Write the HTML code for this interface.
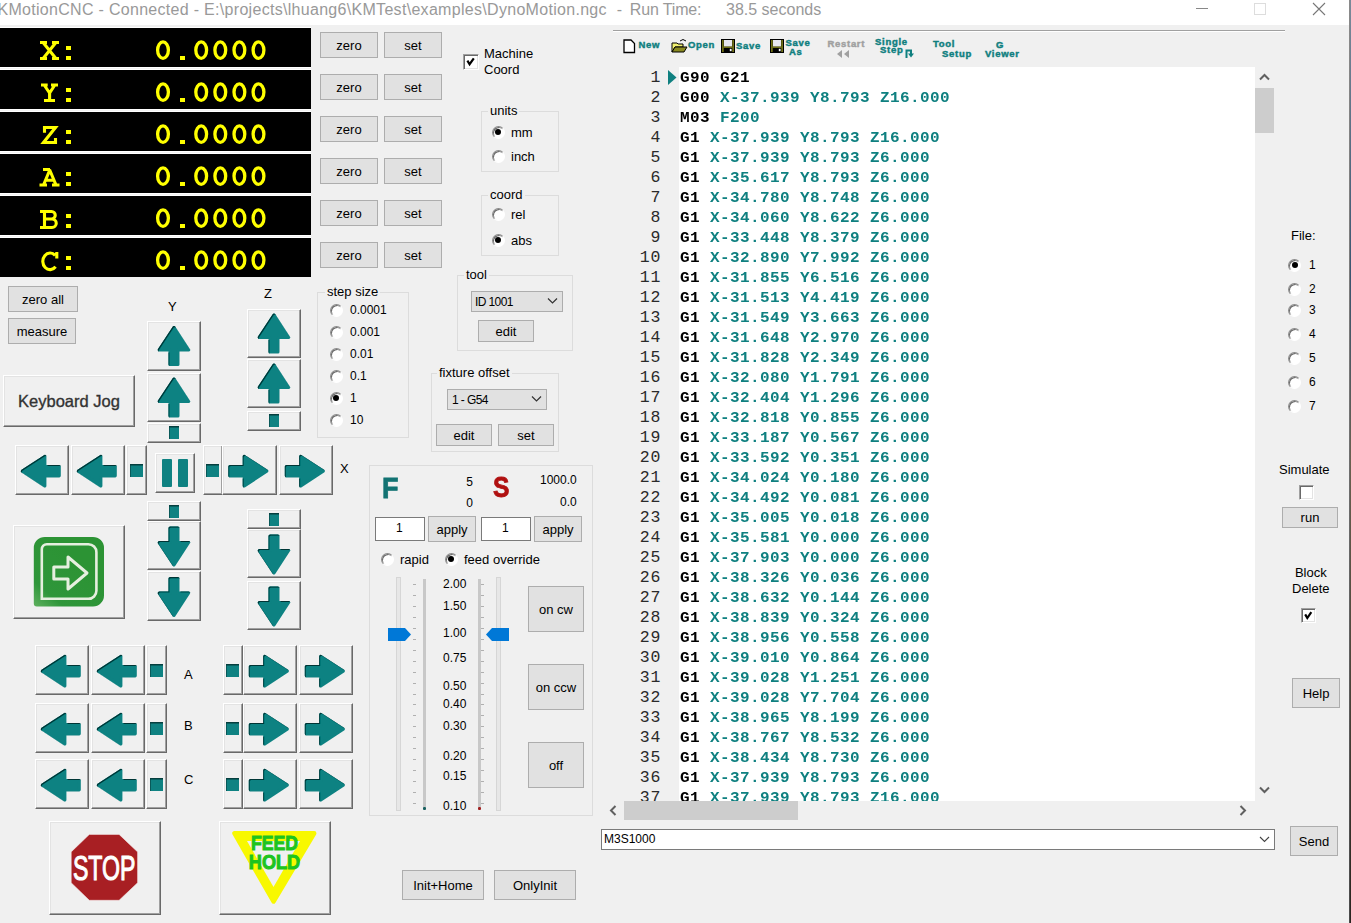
<!DOCTYPE html><html><head><meta charset="utf-8"><style>
*{box-sizing:border-box}
html,body{margin:0;padding:0}
body{width:1351px;height:923px;overflow:hidden;background:#f0f0f0;position:relative;font-family:"Liberation Sans",sans-serif;font-size:13px;color:#000}
.a{position:absolute}
.t{position:absolute;white-space:nowrap;line-height:1}
.btn{position:absolute;background:#e1e1e1;border:1px solid #adadad;display:flex;align-items:center;justify-content:center;font-size:13px;white-space:nowrap}
.j{position:absolute;background:#f0f0f0;border-top:1px solid #fff;border-left:1px solid #fff;border-right:1px solid #696969;border-bottom:1px solid #696969;box-shadow:inset -1px -1px 0 #a0a0a0, inset 1px 1px 0 #e3e3e3}
.j svg{position:absolute;left:0;top:0}
.grp{position:absolute;border:1px solid #dcdcdc}
.gl{position:absolute;background:#f0f0f0;padding:0 2px;white-space:nowrap;line-height:1;font-size:13px}
.rad{position:absolute;width:13px;height:13px;border-radius:50%;border:1px solid;border-color:#8a8a8a #fff #fff #8a8a8a;background:#fff;box-shadow:inset 1px 1px 0 #6a6a6a}
.rad.on::after{content:"";position:absolute;left:2.5px;top:2.5px;width:6px;height:6px;border-radius:50%;background:#000}
.chk{position:absolute;width:16px;height:16px;border:1px solid;border-color:#a0a0a0 #fff #fff #a0a0a0;background:#fff;box-shadow:inset 1px 1px 0 #696969, inset -1px -1px 0 #e3e3e3}
.dro{position:absolute;left:0;width:311px;height:39px;background:#000;color:#ffff00;font-family:"Liberation Mono",monospace;font-weight:bold}
.code{font-family:"Liberation Mono",monospace;font-weight:bold;font-size:16px;letter-spacing:0.4px;transform:scaleY(0.9);transform-origin:0 12.3px}
.ln{font-family:"Liberation Mono",monospace;font-size:16.5px;color:#2a2a2a;letter-spacing:1px}
.tb{position:absolute;font-family:"Liberation Sans",sans-serif;font-weight:bold;font-size:9.5px;letter-spacing:0.7px;-webkit-text-stroke:0.45px #0f7f7f;color:#0f7f7f;line-height:1;white-space:nowrap}
</style></head><body>
<svg width="0" height="0" style="position:absolute"><defs><filter id="ish" x="-10%" y="-10%" width="120%" height="120%"><feOffset dx="0.9" dy="1.4" in="SourceAlpha" result="o"/><feComposite in="SourceAlpha" in2="o" operator="out" result="edge"/><feFlood flood-color="#053535"/><feComposite in2="edge" operator="in" result="sh"/><feMerge><feMergeNode in="SourceGraphic"/><feMergeNode in="sh"/></feMerge></filter></defs></svg>
<div class="a" style="left:0;top:0;width:1351px;height:25px;background:#fff"></div>
<div class="t" style="left:-2.6px;top:1.6px;font-size:16px;letter-spacing:0.3px;color:#999">KMotionCNC - Connected - E:\projects\lhuang6\KMTest\examples\DynoMotion.ngc</div>
<div class="t" style="left:616.7px;top:1.6px;font-size:16px;color:#999">-</div>
<div class="t" style="left:629.8px;top:1.6px;font-size:16px;letter-spacing:-0.15px;color:#999">Run Time:</div>
<div class="t" style="left:726px;top:1.6px;font-size:16px;color:#999">38.5 seconds</div>
<div class="a" style="left:1196px;top:8px;width:12px;height:1px;background:#888"></div>
<div class="a" style="left:1254px;top:3px;width:12px;height:12px;border:1px solid #ddd"></div>
<svg class="a" style="left:1312px;top:2px" width="14" height="14"><path d="M1 1L13 13M13 1L1 13" stroke="#777" stroke-width="1.1"/></svg>
<div class="a" style="left:0;top:27px;width:311px;height:250px;background:#fff"></div>
<div class="a" style="left:0;top:68px;width:311px;height:1px;background:#f3f3f3"></div>
<div class="a" style="left:0;top:110px;width:311px;height:1px;background:#f3f3f3"></div>
<div class="a" style="left:0;top:152px;width:311px;height:1px;background:#f3f3f3"></div>
<div class="a" style="left:0;top:194px;width:311px;height:1px;background:#f3f3f3"></div>
<div class="a" style="left:0;top:236px;width:311px;height:1px;background:#f3f3f3"></div>
<div class="dro" style="top:28px"><svg width="311" height="39" style="position:absolute;left:0;top:0"><path d="M40 14.5H47 M52 14.5H59 M40 30.5H47 M52 30.5H59 M43.5 15 L55.5 30 M55.5 15 L43.5 30" fill="none" stroke="#ffff00" stroke-width="3.1" stroke-linejoin="miter"/><rect x="66" y="18" width="5" height="4" fill="#ffff00"/><rect x="66" y="28" width="5" height="4" fill="#ffff00"/><ellipse cx="163.0" cy="22.1" rx="5.4" ry="8.2" fill="none" stroke="#ffff00" stroke-width="3.3"/><ellipse cx="201.2" cy="22.1" rx="5.4" ry="8.2" fill="none" stroke="#ffff00" stroke-width="3.3"/><ellipse cx="220.3" cy="22.1" rx="5.4" ry="8.2" fill="none" stroke="#ffff00" stroke-width="3.3"/><ellipse cx="239.4" cy="22.1" rx="5.4" ry="8.2" fill="none" stroke="#ffff00" stroke-width="3.3"/><ellipse cx="258.5" cy="22.1" rx="5.4" ry="8.2" fill="none" stroke="#ffff00" stroke-width="3.3"/><rect x="180" y="28" width="5" height="4" fill="#ffff00"/></svg></div>
<div class="btn" style="left:320px;top:32px;width:58px;height:26px">zero</div>
<div class="btn" style="left:384px;top:32px;width:58px;height:26px">set</div>
<div class="dro" style="top:70px"><svg width="311" height="39" style="position:absolute;left:0;top:0"><path d="M41 15H47.7 M51 15H58 M44.5 15.5 L49.6 23 L54.5 15.5 M49.6 23V30.5 M44 30.5H55" fill="none" stroke="#ffff00" stroke-width="3.1" stroke-linejoin="miter"/><rect x="66" y="18" width="5" height="4" fill="#ffff00"/><rect x="66" y="28" width="5" height="4" fill="#ffff00"/><ellipse cx="163.0" cy="22.1" rx="5.4" ry="8.2" fill="none" stroke="#ffff00" stroke-width="3.3"/><ellipse cx="201.2" cy="22.1" rx="5.4" ry="8.2" fill="none" stroke="#ffff00" stroke-width="3.3"/><ellipse cx="220.3" cy="22.1" rx="5.4" ry="8.2" fill="none" stroke="#ffff00" stroke-width="3.3"/><ellipse cx="239.4" cy="22.1" rx="5.4" ry="8.2" fill="none" stroke="#ffff00" stroke-width="3.3"/><ellipse cx="258.5" cy="22.1" rx="5.4" ry="8.2" fill="none" stroke="#ffff00" stroke-width="3.3"/><rect x="180" y="28" width="5" height="4" fill="#ffff00"/></svg></div>
<div class="btn" style="left:320px;top:74px;width:58px;height:26px">zero</div>
<div class="btn" style="left:384px;top:74px;width:58px;height:26px">set</div>
<div class="dro" style="top:112px"><svg width="311" height="39" style="position:absolute;left:0;top:0"><path d="M44.5 20.7 V15.5 H55.5 L43.5 30.5 H55.5 V26" fill="none" stroke="#ffff00" stroke-width="3.1" stroke-linejoin="miter"/><rect x="66" y="18" width="5" height="4" fill="#ffff00"/><rect x="66" y="28" width="5" height="4" fill="#ffff00"/><ellipse cx="163.0" cy="22.1" rx="5.4" ry="8.2" fill="none" stroke="#ffff00" stroke-width="3.3"/><ellipse cx="201.2" cy="22.1" rx="5.4" ry="8.2" fill="none" stroke="#ffff00" stroke-width="3.3"/><ellipse cx="220.3" cy="22.1" rx="5.4" ry="8.2" fill="none" stroke="#ffff00" stroke-width="3.3"/><ellipse cx="239.4" cy="22.1" rx="5.4" ry="8.2" fill="none" stroke="#ffff00" stroke-width="3.3"/><ellipse cx="258.5" cy="22.1" rx="5.4" ry="8.2" fill="none" stroke="#ffff00" stroke-width="3.3"/><rect x="180" y="28" width="5" height="4" fill="#ffff00"/></svg></div>
<div class="btn" style="left:320px;top:116px;width:58px;height:26px">zero</div>
<div class="btn" style="left:384px;top:116px;width:58px;height:26px">set</div>
<div class="dro" style="top:154px"><svg width="311" height="39" style="position:absolute;left:0;top:0"><path d="M43 15.5 H50 M50 15.5 L43.5 31 M49.5 15.5 L56 31 M45.5 26.3 H53.5 M39.5 31 H47 M52 31 H59.5" fill="none" stroke="#ffff00" stroke-width="3.1" stroke-linejoin="miter"/><rect x="66" y="18" width="5" height="4" fill="#ffff00"/><rect x="66" y="28" width="5" height="4" fill="#ffff00"/><ellipse cx="163.0" cy="22.1" rx="5.4" ry="8.2" fill="none" stroke="#ffff00" stroke-width="3.3"/><ellipse cx="201.2" cy="22.1" rx="5.4" ry="8.2" fill="none" stroke="#ffff00" stroke-width="3.3"/><ellipse cx="220.3" cy="22.1" rx="5.4" ry="8.2" fill="none" stroke="#ffff00" stroke-width="3.3"/><ellipse cx="239.4" cy="22.1" rx="5.4" ry="8.2" fill="none" stroke="#ffff00" stroke-width="3.3"/><ellipse cx="258.5" cy="22.1" rx="5.4" ry="8.2" fill="none" stroke="#ffff00" stroke-width="3.3"/><rect x="180" y="28" width="5" height="4" fill="#ffff00"/></svg></div>
<div class="btn" style="left:320px;top:158px;width:58px;height:26px">zero</div>
<div class="btn" style="left:384px;top:158px;width:58px;height:26px">set</div>
<div class="dro" style="top:196px"><svg width="311" height="39" style="position:absolute;left:0;top:0"><path d="M40 15.5 H51.5 A3.75 3.75 0 0 1 51.5 23 H44.5 M44.5 15.5 V31 M44.5 23 H52 A4.25 4.25 0 0 1 52 31.5 H40" fill="none" stroke="#ffff00" stroke-width="3.1" stroke-linejoin="miter"/><rect x="66" y="18" width="5" height="4" fill="#ffff00"/><rect x="66" y="28" width="5" height="4" fill="#ffff00"/><ellipse cx="163.0" cy="22.1" rx="5.4" ry="8.2" fill="none" stroke="#ffff00" stroke-width="3.3"/><ellipse cx="201.2" cy="22.1" rx="5.4" ry="8.2" fill="none" stroke="#ffff00" stroke-width="3.3"/><ellipse cx="220.3" cy="22.1" rx="5.4" ry="8.2" fill="none" stroke="#ffff00" stroke-width="3.3"/><ellipse cx="239.4" cy="22.1" rx="5.4" ry="8.2" fill="none" stroke="#ffff00" stroke-width="3.3"/><ellipse cx="258.5" cy="22.1" rx="5.4" ry="8.2" fill="none" stroke="#ffff00" stroke-width="3.3"/><rect x="180" y="28" width="5" height="4" fill="#ffff00"/></svg></div>
<div class="btn" style="left:320px;top:200px;width:58px;height:26px">zero</div>
<div class="btn" style="left:384px;top:200px;width:58px;height:26px">set</div>
<div class="dro" style="top:238px"><svg width="311" height="39" style="position:absolute;left:0;top:0"><path d="M55.2 17.4 A7.3 8.3 0 1 0 55.6 28.8 M56.8 14 V20.5" fill="none" stroke="#ffff00" stroke-width="3.1" stroke-linejoin="miter"/><rect x="66" y="18" width="5" height="4" fill="#ffff00"/><rect x="66" y="28" width="5" height="4" fill="#ffff00"/><ellipse cx="163.0" cy="22.1" rx="5.4" ry="8.2" fill="none" stroke="#ffff00" stroke-width="3.3"/><ellipse cx="201.2" cy="22.1" rx="5.4" ry="8.2" fill="none" stroke="#ffff00" stroke-width="3.3"/><ellipse cx="220.3" cy="22.1" rx="5.4" ry="8.2" fill="none" stroke="#ffff00" stroke-width="3.3"/><ellipse cx="239.4" cy="22.1" rx="5.4" ry="8.2" fill="none" stroke="#ffff00" stroke-width="3.3"/><ellipse cx="258.5" cy="22.1" rx="5.4" ry="8.2" fill="none" stroke="#ffff00" stroke-width="3.3"/><rect x="180" y="28" width="5" height="4" fill="#ffff00"/></svg></div>
<div class="btn" style="left:320px;top:242px;width:58px;height:26px">zero</div>
<div class="btn" style="left:384px;top:242px;width:58px;height:26px">set</div>
<div class="chk" style="left:463px;top:54px"></div>
<svg class="a" style="left:463px;top:54px" width="16" height="16"><path d="M4.4 6.6L6.6 10.2L10.8 4.4" stroke="#000" stroke-width="2.2" fill="none"/></svg>
<div class="t" style="left:484px;top:45.5px;line-height:16px">Machine<br>Coord</div>
<div class="grp" style="left:481px;top:111px;width:78px;height:61px"></div>
<div class="gl" style="left:488px;top:104px">units</div>
<div class="rad on" style="left:491.5px;top:125.5px"></div>
<div class="t" style="left:511px;top:126px">mm</div>
<div class="rad" style="left:491.5px;top:149.5px"></div>
<div class="t" style="left:511px;top:150px">inch</div>
<div class="grp" style="left:481px;top:195px;width:78px;height:61px"></div>
<div class="gl" style="left:488px;top:188px">coord</div>
<div class="rad" style="left:491.5px;top:207.5px"></div>
<div class="t" style="left:511px;top:208px">rel</div>
<div class="rad on" style="left:491.5px;top:233.5px"></div>
<div class="t" style="left:511px;top:234px">abs</div>
<div class="grp" style="left:457px;top:275px;width:116px;height:76px"></div>
<div class="gl" style="left:464px;top:268px">tool</div>
<div class="btn" style="left:471px;top:291px;width:92px;height:21px;justify-content:flex-start;padding-left:3px;font-size:12px;letter-spacing:-0.6px">ID 1001</div>
<svg class="a" style="left:546.5px;top:297px" width="11" height="8"><path d="M1 1.5L5.5 6L10 1.5" stroke="#333" stroke-width="1.2" fill="none"/></svg>
<div class="btn" style="left:478px;top:320px;width:56px;height:22px">edit</div>
<div class="grp" style="left:431px;top:373px;width:128px;height:79px"></div>
<div class="gl" style="left:437px;top:366px">fixture offset</div>
<div class="btn" style="left:447px;top:389px;width:100px;height:21px;justify-content:flex-start;padding-left:4px;font-size:12px;letter-spacing:-0.6px">1 - G54</div>
<svg class="a" style="left:531px;top:395px" width="11" height="8"><path d="M1 1.5L5.5 6L10 1.5" stroke="#333" stroke-width="1.2" fill="none"/></svg>
<div class="btn" style="left:436px;top:424px;width:56px;height:22px">edit</div>
<div class="btn" style="left:498px;top:424px;width:56px;height:22px">set</div>
<div class="grp" style="left:317px;top:292px;width:92px;height:146px"></div>
<div class="gl" style="left:325px;top:285px">step size</div>
<div class="rad" style="left:329.5px;top:303.5px"></div>
<div class="t" style="left:350px;top:304px;font-size:12px">0.0001</div>
<div class="rad" style="left:329.5px;top:325.5px"></div>
<div class="t" style="left:350px;top:326px;font-size:12px">0.001</div>
<div class="rad" style="left:329.5px;top:347.5px"></div>
<div class="t" style="left:350px;top:348px;font-size:12px">0.01</div>
<div class="rad" style="left:329.5px;top:369.5px"></div>
<div class="t" style="left:350px;top:370px;font-size:12px">0.1</div>
<div class="rad on" style="left:329.5px;top:391.5px"></div>
<div class="t" style="left:350px;top:392px;font-size:12px">1</div>
<div class="rad" style="left:329.5px;top:413.5px"></div>
<div class="t" style="left:350px;top:414px;font-size:12px">10</div>
<div class="btn" style="left:8px;top:286px;width:70px;height:26px">zero all</div>
<div class="btn" style="left:8px;top:318px;width:68px;height:26px">measure</div>
<div class="j" style="left:3px;top:375px;width:132px;height:52px;display:flex;align-items:center;justify-content:center;font-size:16.5px;color:#333;-webkit-text-stroke:0.35px #333">Keyboard Jog</div>
<div class="t" style="left:168px;top:300px">Y</div>
<div class="t" style="left:264px;top:287px">Z</div>
<div class="t" style="left:340px;top:462px">X</div>
<div class="j" style="left:147px;top:321px;width:54px;height:50px"><svg width="52" height="48"><polygon points="26.0,5.6 40.6,28.0 29.9,28.0 29.9,42.4 22.1,42.4 22.1,28.0 11.3,28.0" fill="#0f8282" stroke="#0f8282" stroke-width="3.2" stroke-linejoin="round" filter="url(#ish)"/></svg></div>
<div class="j" style="left:147px;top:373px;width:54px;height:49px"><svg width="52" height="47"><polygon points="26.0,5.1 40.6,27.5 29.9,27.5 29.9,41.9 22.1,41.9 22.1,27.5 11.3,27.5" fill="#0f8282" stroke="#0f8282" stroke-width="3.2" stroke-linejoin="round" filter="url(#ish)"/></svg></div>
<div class="j" style="left:147px;top:423px;width:54px;height:20px"><div class="a" style="left:21.0px;top:1.5px;width:10px;height:13px;background:#0f8282;box-shadow:inset 0.6px 1.6px 0 #063f3f"></div></div>
<div class="j" style="left:247px;top:309px;width:54px;height:49px"><svg width="52" height="47"><polygon points="26.0,5.1 40.6,27.5 29.9,27.5 29.9,41.9 22.1,41.9 22.1,27.5 11.3,27.5" fill="#0f8282" stroke="#0f8282" stroke-width="3.2" stroke-linejoin="round" filter="url(#ish)"/></svg></div>
<div class="j" style="left:247px;top:359px;width:54px;height:49px"><svg width="52" height="47"><polygon points="26.0,5.1 40.6,27.5 29.9,27.5 29.9,41.9 22.1,41.9 22.1,27.5 11.3,27.5" fill="#0f8282" stroke="#0f8282" stroke-width="3.2" stroke-linejoin="round" filter="url(#ish)"/></svg></div>
<div class="j" style="left:247px;top:411px;width:54px;height:20px"><div class="a" style="left:21.0px;top:1.5px;width:10px;height:13px;background:#0f8282;box-shadow:inset 0.6px 1.6px 0 #063f3f"></div></div>
<div class="j" style="left:15px;top:445px;width:54px;height:50px"><svg width="52" height="48"><polygon points="6.4,25.2 28.8,10.5 28.8,20.6 43.2,20.6 43.2,29.8 28.8,29.8 28.8,39.9" fill="#0f8282" stroke="#0f8282" stroke-width="3.2" stroke-linejoin="round" filter="url(#ish)"/></svg></div>
<div class="j" style="left:71px;top:445px;width:54px;height:50px"><svg width="52" height="48"><polygon points="6.4,25.2 28.8,10.5 28.8,20.6 43.2,20.6 43.2,29.8 28.8,29.8 28.8,39.9" fill="#0f8282" stroke="#0f8282" stroke-width="3.2" stroke-linejoin="round" filter="url(#ish)"/></svg></div>
<div class="j" style="left:126px;top:445px;width:21px;height:50px"><div class="a" style="left:3.0px;top:18.0px;width:13px;height:13px;background:#0f8282;box-shadow:inset 0.6px 1.6px 0 #063f3f"></div></div>
<div class="j" style="left:155px;top:453px;width:40px;height:40px"><div class="a" style="left:6px;top:5px;width:10px;height:28px;background:#0f8282;border-radius:1px"></div><div class="a" style="left:22px;top:5px;width:10px;height:28px;background:#0f8282;border-radius:1px"></div></div>
<div class="j" style="left:203px;top:445px;width:20px;height:50px"><div class="a" style="left:2.0px;top:18.0px;width:13px;height:13px;background:#0f8282;box-shadow:inset 0.6px 1.6px 0 #063f3f"></div></div>
<div class="j" style="left:222px;top:445px;width:55px;height:50px"><svg width="53" height="48"><polygon points="43.7,25.2 21.3,10.5 21.3,20.6 6.9,20.6 6.9,29.8 21.3,29.8 21.3,39.9" fill="#0f8282" stroke="#0f8282" stroke-width="3.2" stroke-linejoin="round" filter="url(#ish)"/></svg></div>
<div class="j" style="left:279px;top:445px;width:54px;height:50px"><svg width="52" height="48"><polygon points="43.2,25.2 20.8,10.5 20.8,20.6 6.4,20.6 6.4,29.8 20.8,29.8 20.8,39.9" fill="#0f8282" stroke="#0f8282" stroke-width="3.2" stroke-linejoin="round" filter="url(#ish)"/></svg></div>
<div class="j" style="left:147px;top:501px;width:54px;height:20px"><div class="a" style="left:21.0px;top:2.5px;width:10px;height:13px;background:#0f8282;box-shadow:inset 0.6px 1.6px 0 #063f3f"></div></div>
<div class="j" style="left:147px;top:521px;width:54px;height:49px"><svg width="52" height="47"><polygon points="26.0,42.9 40.6,20.5 29.9,20.5 29.9,6.1 22.1,6.1 22.1,20.5 11.3,20.5" fill="#0f8282" stroke="#0f8282" stroke-width="3.2" stroke-linejoin="round" filter="url(#ish)"/></svg></div>
<div class="j" style="left:147px;top:571px;width:54px;height:50px"><svg width="52" height="48"><polygon points="26.0,43.4 40.6,21.0 29.9,21.0 29.9,6.6 22.1,6.6 22.1,21.0 11.3,21.0" fill="#0f8282" stroke="#0f8282" stroke-width="3.2" stroke-linejoin="round" filter="url(#ish)"/></svg></div>
<div class="j" style="left:247px;top:509px;width:54px;height:20px"><div class="a" style="left:21.0px;top:2.5px;width:10px;height:13px;background:#0f8282;box-shadow:inset 0.6px 1.6px 0 #063f3f"></div></div>
<div class="j" style="left:247px;top:529px;width:54px;height:49px"><svg width="52" height="47"><polygon points="26.0,42.9 40.6,20.5 29.9,20.5 29.9,6.1 22.1,6.1 22.1,20.5 11.3,20.5" fill="#0f8282" stroke="#0f8282" stroke-width="3.2" stroke-linejoin="round" filter="url(#ish)"/></svg></div>
<div class="j" style="left:247px;top:581px;width:54px;height:49px"><svg width="52" height="47"><polygon points="26.0,42.9 40.6,20.5 29.9,20.5 29.9,6.1 22.1,6.1 22.1,20.5 11.3,20.5" fill="#0f8282" stroke="#0f8282" stroke-width="3.2" stroke-linejoin="round" filter="url(#ish)"/></svg></div>
<div class="j" style="left:13px;top:525px;width:112px;height:94px"></div>
<svg class="a" style="left:32px;top:535px" width="73" height="73"><defs><linearGradient id="gg" x1="0" y1="1" x2="0.6" y2="0.3"><stop offset="0" stop-color="#5fb05f"/><stop offset="0.3" stop-color="#2f963a"/><stop offset="1" stop-color="#2c9334"/></linearGradient></defs><path d="M1.8 12.9 a11 11 0 0 1 11 -11 h48.2 a11 11 0 0 1 11 11 v47.5 a11 11 0 0 1 -11 11 h-56.2 a3 3 0 0 1 -3 -3z" fill="url(#gg)"/><path d="M9.8 63.8 V14.2 a5 5 0 0 1 5 -5 h41.6 a8 8 0 0 1 8 8 v38.6 a8 8 0 0 1 -8 8z" fill="none" stroke="#e6efdf" stroke-width="2.6"/><path d="M21.8 32 H36 V22 L55 38 L36 54 V44 H21.8z" fill="none" stroke="#e6efdf" stroke-width="3" stroke-linejoin="round"/></svg>
<div class="j" style="left:35px;top:645px;width:54px;height:50px"><svg width="52" height="48"><polygon points="6.4,25.2 28.8,10.5 28.8,20.6 43.2,20.6 43.2,29.8 28.8,29.8 28.8,39.9" fill="#0f8282" stroke="#0f8282" stroke-width="3.2" stroke-linejoin="round" filter="url(#ish)"/></svg></div>
<div class="j" style="left:91px;top:645px;width:54px;height:50px"><svg width="52" height="48"><polygon points="6.4,25.2 28.8,10.5 28.8,20.6 43.2,20.6 43.2,29.8 28.8,29.8 28.8,39.9" fill="#0f8282" stroke="#0f8282" stroke-width="3.2" stroke-linejoin="round" filter="url(#ish)"/></svg></div>
<div class="j" style="left:146px;top:645px;width:21px;height:50px"><div class="a" style="left:3.0px;top:18.0px;width:13px;height:13px;background:#0f8282;box-shadow:inset 0.6px 1.6px 0 #063f3f"></div></div>
<div class="t" style="left:184px;top:668px">A</div>
<div class="j" style="left:223px;top:645px;width:20px;height:50px"><div class="a" style="left:2.0px;top:18.0px;width:13px;height:13px;background:#0f8282;box-shadow:inset 0.6px 1.6px 0 #063f3f"></div></div>
<div class="j" style="left:243px;top:645px;width:54px;height:50px"><svg width="52" height="48"><polygon points="43.2,25.2 20.8,10.5 20.8,20.6 6.4,20.6 6.4,29.8 20.8,29.8 20.8,39.9" fill="#0f8282" stroke="#0f8282" stroke-width="3.2" stroke-linejoin="round" filter="url(#ish)"/></svg></div>
<div class="j" style="left:299px;top:645px;width:54px;height:50px"><svg width="52" height="48"><polygon points="43.2,25.2 20.8,10.5 20.8,20.6 6.4,20.6 6.4,29.8 20.8,29.8 20.8,39.9" fill="#0f8282" stroke="#0f8282" stroke-width="3.2" stroke-linejoin="round" filter="url(#ish)"/></svg></div>
<div class="j" style="left:35px;top:703px;width:54px;height:50px"><svg width="52" height="48"><polygon points="6.4,25.2 28.8,10.5 28.8,20.6 43.2,20.6 43.2,29.8 28.8,29.8 28.8,39.9" fill="#0f8282" stroke="#0f8282" stroke-width="3.2" stroke-linejoin="round" filter="url(#ish)"/></svg></div>
<div class="j" style="left:91px;top:703px;width:54px;height:50px"><svg width="52" height="48"><polygon points="6.4,25.2 28.8,10.5 28.8,20.6 43.2,20.6 43.2,29.8 28.8,29.8 28.8,39.9" fill="#0f8282" stroke="#0f8282" stroke-width="3.2" stroke-linejoin="round" filter="url(#ish)"/></svg></div>
<div class="j" style="left:146px;top:703px;width:21px;height:50px"><div class="a" style="left:3.0px;top:18.0px;width:13px;height:13px;background:#0f8282;box-shadow:inset 0.6px 1.6px 0 #063f3f"></div></div>
<div class="t" style="left:184px;top:719px">B</div>
<div class="j" style="left:223px;top:703px;width:20px;height:50px"><div class="a" style="left:2.0px;top:18.0px;width:13px;height:13px;background:#0f8282;box-shadow:inset 0.6px 1.6px 0 #063f3f"></div></div>
<div class="j" style="left:243px;top:703px;width:54px;height:50px"><svg width="52" height="48"><polygon points="43.2,25.2 20.8,10.5 20.8,20.6 6.4,20.6 6.4,29.8 20.8,29.8 20.8,39.9" fill="#0f8282" stroke="#0f8282" stroke-width="3.2" stroke-linejoin="round" filter="url(#ish)"/></svg></div>
<div class="j" style="left:299px;top:703px;width:54px;height:50px"><svg width="52" height="48"><polygon points="43.2,25.2 20.8,10.5 20.8,20.6 6.4,20.6 6.4,29.8 20.8,29.8 20.8,39.9" fill="#0f8282" stroke="#0f8282" stroke-width="3.2" stroke-linejoin="round" filter="url(#ish)"/></svg></div>
<div class="j" style="left:35px;top:759px;width:54px;height:50px"><svg width="52" height="48"><polygon points="6.4,25.2 28.8,10.5 28.8,20.6 43.2,20.6 43.2,29.8 28.8,29.8 28.8,39.9" fill="#0f8282" stroke="#0f8282" stroke-width="3.2" stroke-linejoin="round" filter="url(#ish)"/></svg></div>
<div class="j" style="left:91px;top:759px;width:54px;height:50px"><svg width="52" height="48"><polygon points="6.4,25.2 28.8,10.5 28.8,20.6 43.2,20.6 43.2,29.8 28.8,29.8 28.8,39.9" fill="#0f8282" stroke="#0f8282" stroke-width="3.2" stroke-linejoin="round" filter="url(#ish)"/></svg></div>
<div class="j" style="left:146px;top:759px;width:21px;height:50px"><div class="a" style="left:3.0px;top:18.0px;width:13px;height:13px;background:#0f8282;box-shadow:inset 0.6px 1.6px 0 #063f3f"></div></div>
<div class="t" style="left:184px;top:773px">C</div>
<div class="j" style="left:223px;top:759px;width:20px;height:50px"><div class="a" style="left:2.0px;top:18.0px;width:13px;height:13px;background:#0f8282;box-shadow:inset 0.6px 1.6px 0 #063f3f"></div></div>
<div class="j" style="left:243px;top:759px;width:54px;height:50px"><svg width="52" height="48"><polygon points="43.2,25.2 20.8,10.5 20.8,20.6 6.4,20.6 6.4,29.8 20.8,29.8 20.8,39.9" fill="#0f8282" stroke="#0f8282" stroke-width="3.2" stroke-linejoin="round" filter="url(#ish)"/></svg></div>
<div class="j" style="left:299px;top:759px;width:54px;height:50px"><svg width="52" height="48"><polygon points="43.2,25.2 20.8,10.5 20.8,20.6 6.4,20.6 6.4,29.8 20.8,29.8 20.8,39.9" fill="#0f8282" stroke="#0f8282" stroke-width="3.2" stroke-linejoin="round" filter="url(#ish)"/></svg></div>
<div class="j" style="left:49px;top:821px;width:112px;height:94px"></div>
<svg class="a" style="left:70px;top:834px" width="69" height="67"><polygon points="19.3,0.4 49.1,0.4 67.6,17.9 67.6,48.8 49.1,66.3 19.3,66.3 1.2,48.8 1.2,17.9" fill="#a81f23" stroke="#f4e4e4" stroke-width="0.6"/><text x="34.2" y="46.2" text-anchor="middle" font-family="Liberation Sans" font-size="35.5" fill="#fff" stroke="#fff" stroke-width="1.1" textLength="62.5" lengthAdjust="spacingAndGlyphs">STOP</text></svg>
<div class="j" style="left:219px;top:821px;width:112px;height:94px"></div>
<svg class="a" style="left:230px;top:830px" width="90" height="76"><polygon points="4.5,3.3 84.2,3.3 43.5,71.5" fill="#f8f800" stroke="#f8f800" stroke-width="4.5" stroke-linejoin="round"/><polygon points="17,11 70,11 43.5,57" fill="#f0f0f0"/><text x="44.5" y="20" text-anchor="middle" font-family="Liberation Sans" font-weight="bold" font-size="20.6" fill="#1ec41e" stroke="#1ec41e" stroke-width="1.0" textLength="47" lengthAdjust="spacingAndGlyphs">FEED</text><text x="44.5" y="38.8" text-anchor="middle" font-family="Liberation Sans" font-weight="bold" font-size="20.6" fill="#1ec41e" stroke="#1ec41e" stroke-width="1.0" textLength="51.5" lengthAdjust="spacingAndGlyphs">HOLD</text></svg>
<div class="grp" style="left:369px;top:465px;width:224px;height:351px"></div>
<div class="t" style="left:382px;top:472.5px;font-size:30px;font-weight:bold;color:#137373;-webkit-text-stroke:0.8px #137373;transform:scaleX(0.9);transform-origin:0 0">F</div>
<div class="t" style="left:493px;top:472.5px;font-size:29px;font-weight:bold;color:#b01010;-webkit-text-stroke:0.8px #b01010;transform:scaleX(0.85);transform-origin:0 0">S</div>
<div class="t" style="left:466.2px;top:475.5px;font-size:12px">5</div>
<div class="t" style="left:466.2px;top:497px;font-size:12px">0</div>
<div class="t" style="left:540px;top:474px;font-size:12px">1000.0</div>
<div class="t" style="left:560px;top:495.5px;font-size:12px">0.0</div>
<div class="a" style="left:375px;top:517px;width:50px;height:24px;background:#fff;border:1px solid #7a7a7a"></div><div class="t" style="left:396px;top:522px;font-size:12px">1</div>
<div class="btn" style="left:428px;top:516px;width:48px;height:26px">apply</div>
<div class="a" style="left:481px;top:517px;width:50px;height:24px;background:#fff;border:1px solid #7a7a7a"></div><div class="t" style="left:502px;top:522px;font-size:12px">1</div>
<div class="btn" style="left:534px;top:516px;width:48px;height:26px">apply</div>
<div class="rad" style="left:380.5px;top:552.5px"></div>
<div class="t" style="left:400px;top:553px">rapid</div>
<div class="rad on" style="left:444.5px;top:552.5px"></div>
<div class="t" style="left:464px;top:553px">feed override</div>
<div class="a" style="left:396px;top:577px;width:5px;height:234px;background:#e7e7e7;border:1px solid #d6d6d6"></div>
<div class="a" style="left:496px;top:577px;width:5px;height:234px;background:#e7e7e7;border:1px solid #d6d6d6"></div>
<div class="a" style="left:423px;top:579px;width:3px;height:228px;background:#c8c8c8"></div>
<div class="a" style="left:478px;top:579px;width:3px;height:228px;background:#c8c8c8"></div>
<div class="a" style="left:423px;top:807px;width:3px;height:3px;border-radius:1px;background:#1a6060"></div>
<div class="a" style="left:478px;top:807px;width:3px;height:3px;border-radius:1px;background:#a02020"></div>
<div class="a" style="left:413px;top:584px;width:3px;height:1px;background:#b0b0b0"></div>
<div class="a" style="left:481px;top:584px;width:3px;height:1px;background:#b0b0b0"></div>
<div class="a" style="left:413px;top:595px;width:3px;height:1px;background:#b0b0b0"></div>
<div class="a" style="left:481px;top:595px;width:3px;height:1px;background:#b0b0b0"></div>
<div class="a" style="left:413px;top:606px;width:3px;height:1px;background:#b0b0b0"></div>
<div class="a" style="left:481px;top:606px;width:3px;height:1px;background:#b0b0b0"></div>
<div class="a" style="left:413px;top:617px;width:3px;height:1px;background:#b0b0b0"></div>
<div class="a" style="left:481px;top:617px;width:3px;height:1px;background:#b0b0b0"></div>
<div class="a" style="left:413px;top:628px;width:3px;height:1px;background:#b0b0b0"></div>
<div class="a" style="left:481px;top:628px;width:3px;height:1px;background:#b0b0b0"></div>
<div class="a" style="left:413px;top:639px;width:3px;height:1px;background:#b0b0b0"></div>
<div class="a" style="left:481px;top:639px;width:3px;height:1px;background:#b0b0b0"></div>
<div class="a" style="left:413px;top:650px;width:3px;height:1px;background:#b0b0b0"></div>
<div class="a" style="left:481px;top:650px;width:3px;height:1px;background:#b0b0b0"></div>
<div class="a" style="left:413px;top:661px;width:3px;height:1px;background:#b0b0b0"></div>
<div class="a" style="left:481px;top:661px;width:3px;height:1px;background:#b0b0b0"></div>
<div class="a" style="left:413px;top:672px;width:3px;height:1px;background:#b0b0b0"></div>
<div class="a" style="left:481px;top:672px;width:3px;height:1px;background:#b0b0b0"></div>
<div class="a" style="left:413px;top:683px;width:3px;height:1px;background:#b0b0b0"></div>
<div class="a" style="left:481px;top:683px;width:3px;height:1px;background:#b0b0b0"></div>
<div class="a" style="left:413px;top:694px;width:3px;height:1px;background:#b0b0b0"></div>
<div class="a" style="left:481px;top:694px;width:3px;height:1px;background:#b0b0b0"></div>
<div class="a" style="left:413px;top:704px;width:3px;height:1px;background:#b0b0b0"></div>
<div class="a" style="left:481px;top:704px;width:3px;height:1px;background:#b0b0b0"></div>
<div class="a" style="left:413px;top:715px;width:3px;height:1px;background:#b0b0b0"></div>
<div class="a" style="left:481px;top:715px;width:3px;height:1px;background:#b0b0b0"></div>
<div class="a" style="left:413px;top:726px;width:3px;height:1px;background:#b0b0b0"></div>
<div class="a" style="left:481px;top:726px;width:3px;height:1px;background:#b0b0b0"></div>
<div class="a" style="left:413px;top:737px;width:3px;height:1px;background:#b0b0b0"></div>
<div class="a" style="left:481px;top:737px;width:3px;height:1px;background:#b0b0b0"></div>
<div class="a" style="left:413px;top:748px;width:3px;height:1px;background:#b0b0b0"></div>
<div class="a" style="left:481px;top:748px;width:3px;height:1px;background:#b0b0b0"></div>
<div class="a" style="left:413px;top:759px;width:3px;height:1px;background:#b0b0b0"></div>
<div class="a" style="left:481px;top:759px;width:3px;height:1px;background:#b0b0b0"></div>
<div class="a" style="left:413px;top:770px;width:3px;height:1px;background:#b0b0b0"></div>
<div class="a" style="left:481px;top:770px;width:3px;height:1px;background:#b0b0b0"></div>
<div class="a" style="left:413px;top:781px;width:3px;height:1px;background:#b0b0b0"></div>
<div class="a" style="left:481px;top:781px;width:3px;height:1px;background:#b0b0b0"></div>
<div class="a" style="left:413px;top:792px;width:3px;height:1px;background:#b0b0b0"></div>
<div class="a" style="left:481px;top:792px;width:3px;height:1px;background:#b0b0b0"></div>
<div class="a" style="left:413px;top:803px;width:3px;height:1px;background:#b0b0b0"></div>
<div class="a" style="left:481px;top:803px;width:3px;height:1px;background:#b0b0b0"></div>
<svg class="a" style="left:388px;top:628px" width="24" height="13"><polygon points="0,0 17,0 23,6.5 17,13 0,13" fill="#0078d7"/></svg>
<svg class="a" style="left:486px;top:628px" width="24" height="13"><polygon points="23,0 6,0 0,6.5 6,13 23,13" fill="#0078d7"/></svg>
<div class="t" style="left:443px;top:577.5px;font-size:12px">2.00</div>
<div class="t" style="left:443px;top:599.5px;font-size:12px">1.50</div>
<div class="t" style="left:443px;top:626.5px;font-size:12px">1.00</div>
<div class="t" style="left:443px;top:651.5px;font-size:12px">0.75</div>
<div class="t" style="left:443px;top:679.5px;font-size:12px">0.50</div>
<div class="t" style="left:443px;top:698.0px;font-size:12px">0.40</div>
<div class="t" style="left:443px;top:719.5px;font-size:12px">0.30</div>
<div class="t" style="left:443px;top:749.5px;font-size:12px">0.20</div>
<div class="t" style="left:443px;top:769.5px;font-size:12px">0.15</div>
<div class="t" style="left:443px;top:799.5px;font-size:12px">0.10</div>
<div class="btn" style="left:528px;top:586px;width:56px;height:46px">on cw</div>
<div class="btn" style="left:528px;top:664px;width:56px;height:46px">on ccw</div>
<div class="btn" style="left:528px;top:742px;width:56px;height:46px">off</div>
<div class="btn" style="left:402px;top:870px;width:82px;height:30px">Init+Home</div>
<div class="btn" style="left:494px;top:870px;width:82px;height:30px">OnlyInit</div>
<div class="a" style="left:613px;top:30px;width:672px;height:1px;background:#a0a0a0"></div>
<div class="a" style="left:613px;top:31px;width:672px;height:1px;background:#fff"></div>
<svg class="a" style="left:623px;top:39px" width="13" height="15"><path d="M1 1H8L11.5 4.5V13.5H1Z" fill="#fff" stroke="#000" stroke-width="1.3"/></svg>
<div class="tb" style="left:638.5px;top:40.1px">New</div>
<svg class="a" style="left:671px;top:38px" width="18" height="16"><path d="M1 5H6L7 6H12V9H4L1 14Z" fill="#f0f070" stroke="#000" stroke-width="1"/><path d="M1 14L4 9H16L13 14Z" fill="#8a8a20" stroke="#000" stroke-width="1"/><path d="M9 3Q12 0 15 3" fill="none" stroke="#000" stroke-width="1"/></svg>
<div class="tb" style="left:688px;top:40.1px">Open</div>
<svg class="a" style="left:721px;top:39px" width="14" height="14"><rect x="0" y="0" width="14" height="14" fill="#000"/><rect x="1.2" y="1" width="1.4" height="12" fill="#8c8c1e"/><rect x="11.4" y="1" width="1.4" height="12" fill="#8c8c1e"/><rect x="3" y="1" width="8" height="6.6" fill="#e6e6ee"/><rect x="2.6" y="7.6" width="8.8" height="1.2" fill="#8c8c1e"/><rect x="8.8" y="9.8" width="1.8" height="2.4" fill="#fff"/></svg>
<svg class="a" style="left:770px;top:39px" width="14" height="14"><rect x="0" y="0" width="14" height="14" fill="#000"/><rect x="1.2" y="1" width="1.4" height="12" fill="#8c8c1e"/><rect x="11.4" y="1" width="1.4" height="12" fill="#8c8c1e"/><rect x="3" y="1" width="8" height="6.6" fill="#e6e6ee"/><rect x="2.6" y="7.6" width="8.8" height="1.2" fill="#8c8c1e"/><rect x="8.8" y="9.8" width="1.8" height="2.4" fill="#fff"/></svg>
<div class="tb" style="left:736px;top:41px">Save</div>
<div class="tb" style="left:785.5px;top:37.8px">Save</div>
<div class="tb" style="left:789px;top:47.1px">As</div>
<div class="tb" style="left:827.5px;top:38.7px;color:#a0a0a0;-webkit-text-stroke:0.45px #a0a0a0">Restart</div>
<svg class="a" style="left:837px;top:50px" width="13" height="8"><polygon points="0,4 5,0 5,8" fill="#a0a0a0"/><polygon points="7,4 12,0 12,8" fill="#a0a0a0"/></svg>
<div class="tb" style="left:875px;top:37.1px">Single</div>
<div class="tb" style="left:880px;top:45.1px">Step</div>
<svg class="a" style="left:905px;top:49px" width="11" height="9"><path d="M1.5 9V1.5H6V5" fill="none" stroke="#0f7f7f" stroke-width="2"/><polygon points="3,4.5 9,4.5 6,8.5" fill="#0f7f7f"/></svg>
<div class="tb" style="left:933px;top:38.7px">Tool</div>
<div class="tb" style="left:942px;top:49.1px">Setup</div>
<div class="tb" style="left:996px;top:39.8px">G</div>
<div class="tb" style="left:985px;top:49.1px">Viewer</div>
<div class="a" style="left:679px;top:67px;width:576px;height:734px;background:#fff"></div>
<div class="a" style="left:600px;top:67px;width:655px;height:734px;overflow:hidden">
<div class="t ln" style="right:593.5px;top:3.2px;text-align:right">1</div>
<div class="t code" style="left:80px;top:3px"><span style="color:#000">G90 G21</span></div>
<div class="t ln" style="right:593.5px;top:23.2px;text-align:right">2</div>
<div class="t code" style="left:80px;top:23px"><span style="color:#000">G00</span><span style="color:#0f8080"> X-37.939 Y8.793 Z16.000</span></div>
<div class="t ln" style="right:593.5px;top:43.2px;text-align:right">3</div>
<div class="t code" style="left:80px;top:43px"><span style="color:#000">M03</span><span style="color:#0f8080"> F200</span></div>
<div class="t ln" style="right:593.5px;top:63.2px;text-align:right">4</div>
<div class="t code" style="left:80px;top:63px"><span style="color:#000">G1</span><span style="color:#0f8080"> X-37.939 Y8.793 Z16.000</span></div>
<div class="t ln" style="right:593.5px;top:83.2px;text-align:right">5</div>
<div class="t code" style="left:80px;top:83px"><span style="color:#000">G1</span><span style="color:#0f8080"> X-37.939 Y8.793 Z6.000</span></div>
<div class="t ln" style="right:593.5px;top:103.2px;text-align:right">6</div>
<div class="t code" style="left:80px;top:103px"><span style="color:#000">G1</span><span style="color:#0f8080"> X-35.617 Y8.793 Z6.000</span></div>
<div class="t ln" style="right:593.5px;top:123.2px;text-align:right">7</div>
<div class="t code" style="left:80px;top:123px"><span style="color:#000">G1</span><span style="color:#0f8080"> X-34.780 Y8.748 Z6.000</span></div>
<div class="t ln" style="right:593.5px;top:143.2px;text-align:right">8</div>
<div class="t code" style="left:80px;top:143px"><span style="color:#000">G1</span><span style="color:#0f8080"> X-34.060 Y8.622 Z6.000</span></div>
<div class="t ln" style="right:593.5px;top:163.2px;text-align:right">9</div>
<div class="t code" style="left:80px;top:163px"><span style="color:#000">G1</span><span style="color:#0f8080"> X-33.448 Y8.379 Z6.000</span></div>
<div class="t ln" style="right:593.5px;top:183.2px;text-align:right">10</div>
<div class="t code" style="left:80px;top:183px"><span style="color:#000">G1</span><span style="color:#0f8080"> X-32.890 Y7.992 Z6.000</span></div>
<div class="t ln" style="right:593.5px;top:203.2px;text-align:right">11</div>
<div class="t code" style="left:80px;top:203px"><span style="color:#000">G1</span><span style="color:#0f8080"> X-31.855 Y6.516 Z6.000</span></div>
<div class="t ln" style="right:593.5px;top:223.2px;text-align:right">12</div>
<div class="t code" style="left:80px;top:223px"><span style="color:#000">G1</span><span style="color:#0f8080"> X-31.513 Y4.419 Z6.000</span></div>
<div class="t ln" style="right:593.5px;top:243.2px;text-align:right">13</div>
<div class="t code" style="left:80px;top:243px"><span style="color:#000">G1</span><span style="color:#0f8080"> X-31.549 Y3.663 Z6.000</span></div>
<div class="t ln" style="right:593.5px;top:263.2px;text-align:right">14</div>
<div class="t code" style="left:80px;top:263px"><span style="color:#000">G1</span><span style="color:#0f8080"> X-31.648 Y2.970 Z6.000</span></div>
<div class="t ln" style="right:593.5px;top:283.2px;text-align:right">15</div>
<div class="t code" style="left:80px;top:283px"><span style="color:#000">G1</span><span style="color:#0f8080"> X-31.828 Y2.349 Z6.000</span></div>
<div class="t ln" style="right:593.5px;top:303.2px;text-align:right">16</div>
<div class="t code" style="left:80px;top:303px"><span style="color:#000">G1</span><span style="color:#0f8080"> X-32.080 Y1.791 Z6.000</span></div>
<div class="t ln" style="right:593.5px;top:323.2px;text-align:right">17</div>
<div class="t code" style="left:80px;top:323px"><span style="color:#000">G1</span><span style="color:#0f8080"> X-32.404 Y1.296 Z6.000</span></div>
<div class="t ln" style="right:593.5px;top:343.2px;text-align:right">18</div>
<div class="t code" style="left:80px;top:343px"><span style="color:#000">G1</span><span style="color:#0f8080"> X-32.818 Y0.855 Z6.000</span></div>
<div class="t ln" style="right:593.5px;top:363.2px;text-align:right">19</div>
<div class="t code" style="left:80px;top:363px"><span style="color:#000">G1</span><span style="color:#0f8080"> X-33.187 Y0.567 Z6.000</span></div>
<div class="t ln" style="right:593.5px;top:383.2px;text-align:right">20</div>
<div class="t code" style="left:80px;top:383px"><span style="color:#000">G1</span><span style="color:#0f8080"> X-33.592 Y0.351 Z6.000</span></div>
<div class="t ln" style="right:593.5px;top:403.2px;text-align:right">21</div>
<div class="t code" style="left:80px;top:403px"><span style="color:#000">G1</span><span style="color:#0f8080"> X-34.024 Y0.180 Z6.000</span></div>
<div class="t ln" style="right:593.5px;top:423.2px;text-align:right">22</div>
<div class="t code" style="left:80px;top:423px"><span style="color:#000">G1</span><span style="color:#0f8080"> X-34.492 Y0.081 Z6.000</span></div>
<div class="t ln" style="right:593.5px;top:443.2px;text-align:right">23</div>
<div class="t code" style="left:80px;top:443px"><span style="color:#000">G1</span><span style="color:#0f8080"> X-35.005 Y0.018 Z6.000</span></div>
<div class="t ln" style="right:593.5px;top:463.2px;text-align:right">24</div>
<div class="t code" style="left:80px;top:463px"><span style="color:#000">G1</span><span style="color:#0f8080"> X-35.581 Y0.000 Z6.000</span></div>
<div class="t ln" style="right:593.5px;top:483.2px;text-align:right">25</div>
<div class="t code" style="left:80px;top:483px"><span style="color:#000">G1</span><span style="color:#0f8080"> X-37.903 Y0.000 Z6.000</span></div>
<div class="t ln" style="right:593.5px;top:503.2px;text-align:right">26</div>
<div class="t code" style="left:80px;top:503px"><span style="color:#000">G1</span><span style="color:#0f8080"> X-38.326 Y0.036 Z6.000</span></div>
<div class="t ln" style="right:593.5px;top:523.2px;text-align:right">27</div>
<div class="t code" style="left:80px;top:523px"><span style="color:#000">G1</span><span style="color:#0f8080"> X-38.632 Y0.144 Z6.000</span></div>
<div class="t ln" style="right:593.5px;top:543.2px;text-align:right">28</div>
<div class="t code" style="left:80px;top:543px"><span style="color:#000">G1</span><span style="color:#0f8080"> X-38.839 Y0.324 Z6.000</span></div>
<div class="t ln" style="right:593.5px;top:563.2px;text-align:right">29</div>
<div class="t code" style="left:80px;top:563px"><span style="color:#000">G1</span><span style="color:#0f8080"> X-38.956 Y0.558 Z6.000</span></div>
<div class="t ln" style="right:593.5px;top:583.2px;text-align:right">30</div>
<div class="t code" style="left:80px;top:583px"><span style="color:#000">G1</span><span style="color:#0f8080"> X-39.010 Y0.864 Z6.000</span></div>
<div class="t ln" style="right:593.5px;top:603.2px;text-align:right">31</div>
<div class="t code" style="left:80px;top:603px"><span style="color:#000">G1</span><span style="color:#0f8080"> X-39.028 Y1.251 Z6.000</span></div>
<div class="t ln" style="right:593.5px;top:623.2px;text-align:right">32</div>
<div class="t code" style="left:80px;top:623px"><span style="color:#000">G1</span><span style="color:#0f8080"> X-39.028 Y7.704 Z6.000</span></div>
<div class="t ln" style="right:593.5px;top:643.2px;text-align:right">33</div>
<div class="t code" style="left:80px;top:643px"><span style="color:#000">G1</span><span style="color:#0f8080"> X-38.965 Y8.199 Z6.000</span></div>
<div class="t ln" style="right:593.5px;top:663.2px;text-align:right">34</div>
<div class="t code" style="left:80px;top:663px"><span style="color:#000">G1</span><span style="color:#0f8080"> X-38.767 Y8.532 Z6.000</span></div>
<div class="t ln" style="right:593.5px;top:683.2px;text-align:right">35</div>
<div class="t code" style="left:80px;top:683px"><span style="color:#000">G1</span><span style="color:#0f8080"> X-38.434 Y8.730 Z6.000</span></div>
<div class="t ln" style="right:593.5px;top:703.2px;text-align:right">36</div>
<div class="t code" style="left:80px;top:703px"><span style="color:#000">G1</span><span style="color:#0f8080"> X-37.939 Y8.793 Z6.000</span></div>
<div class="t ln" style="right:593.5px;top:723.2px;text-align:right">37</div>
<div class="t code" style="left:80px;top:723px"><span style="color:#000">G1</span><span style="color:#0f8080"> X-37.939 Y8.793 Z16.000</span></div>
</div>
<svg class="a" style="left:668px;top:70px" width="9" height="15"><polygon points="0,0 8.5,7.5 0,15" fill="#0f8080"/></svg>
<div class="a" style="left:1255px;top:88px;width:19px;height:45px;background:#cdcdcd"></div>
<svg class="a" style="left:1259px;top:73px" width="11" height="8"><path d="M1 6.5L5.5 2L10 6.5" stroke="#606060" stroke-width="2" fill="none"/></svg>
<svg class="a" style="left:1259px;top:786px" width="11" height="8"><path d="M1 1.5L5.5 6L10 1.5" stroke="#606060" stroke-width="2" fill="none"/></svg>
<div class="a" style="left:624px;top:801px;width:174px;height:19px;background:#cdcdcd"></div>
<svg class="a" style="left:609px;top:805px" width="8" height="11"><path d="M6.5 1L2 5.5L6.5 10" stroke="#606060" stroke-width="2" fill="none"/></svg>
<svg class="a" style="left:1239px;top:805px" width="8" height="11"><path d="M1.5 1L6 5.5L1.5 10" stroke="#606060" stroke-width="2" fill="none"/></svg>
<div class="a" style="left:601px;top:829px;width:674px;height:21px;background:#fff;border:1px solid #7a7a7a"></div>
<div class="t" style="left:604px;top:833px;font-size:12px">M3S1000</div>
<svg class="a" style="left:1259px;top:836px" width="11" height="7"><path d="M1 1L5.5 5.5L10 1" stroke="#444" stroke-width="1.1" fill="none"/></svg>
<div class="btn" style="left:1290px;top:826px;width:48px;height:30px">Send</div>
<div class="t" style="left:1291px;top:229px">File:</div>
<div class="rad on" style="left:1288.1px;top:258.5px"></div>
<div class="t" style="left:1309px;top:258.5px;font-size:12px">1</div>
<div class="rad" style="left:1288.1px;top:282.5px"></div>
<div class="t" style="left:1309px;top:282.5px;font-size:12px">2</div>
<div class="rad" style="left:1288.1px;top:304.0px"></div>
<div class="t" style="left:1309px;top:304.0px;font-size:12px">3</div>
<div class="rad" style="left:1288.1px;top:327.5px"></div>
<div class="t" style="left:1309px;top:327.5px;font-size:12px">4</div>
<div class="rad" style="left:1288.1px;top:351.5px"></div>
<div class="t" style="left:1309px;top:351.5px;font-size:12px">5</div>
<div class="rad" style="left:1288.1px;top:375.5px"></div>
<div class="t" style="left:1309px;top:375.5px;font-size:12px">6</div>
<div class="rad" style="left:1288.1px;top:399.5px"></div>
<div class="t" style="left:1309px;top:399.5px;font-size:12px">7</div>
<div class="t" style="left:1279px;top:463px">Simulate</div>
<div class="chk" style="left:1299px;top:484.5px;width:15px;height:15px"></div>
<div class="btn" style="left:1282px;top:507px;width:56px;height:21px">run</div>
<div class="t" style="left:1292px;top:565px;text-align:center;line-height:16px">Block<br>Delete</div>
<div class="chk" style="left:1301px;top:608px;width:15px;height:15px"></div>
<svg class="a" style="left:1301px;top:608px" width="15" height="15"><path d="M4.2 6.4L6.3 10L10.3 4.2" stroke="#000" stroke-width="2.2" fill="none"/></svg>
<div class="btn" style="left:1292px;top:678px;width:48px;height:30px">Help</div>
<div class="a" style="left:1349px;top:0;width:1px;height:923px;background:linear-gradient(#8a8a8a,#777 40%,#4a4a4a)"></div>
<div class="a" style="left:1350px;top:0;width:1px;height:923px;background:linear-gradient(#7a8a9a,#3a5570 30%,#6a6050 50%,#2a2520)"></div>
</body></html>
